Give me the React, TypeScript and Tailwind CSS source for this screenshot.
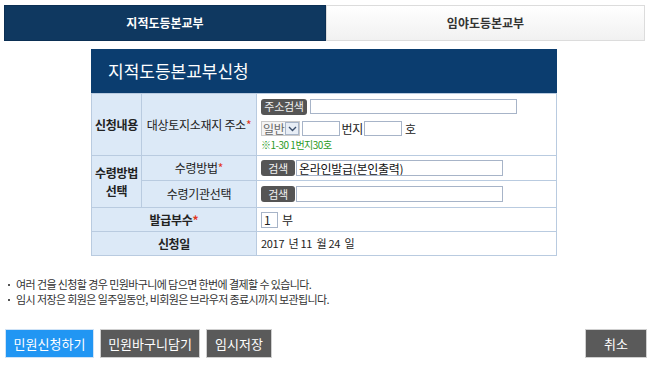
import React from "react";

const labelCell = "border border-[#b9cbe0] bg-[#dce9f7] text-center text-[#222]";
const valueCell = "border border-[#b9cbe0] bg-white ps-[4px] text-[#222]";
const textInput = "h-[15px] border border-[#a7b4c8] bg-white px-[2px] text-[12px] leading-[13px] outline-none";

function Required() {
  return <span className="text-[#e2371c]">*</span>;
}

function DarkButton({ children, className = "" }: { children: React.ReactNode; className?: string }) {
  return (
    <span
      className={[
        "inline-flex h-[16px] items-center justify-center rounded-[3px] bg-[#555555] text-[11px] leading-none tracking-[-0.3px] text-[#f2f2f2]",
        className,
      ].join(" ")}
    >
      {children}
    </span>
  );
}

function FooterButton({ children, tone, width }: { children: React.ReactNode; tone: "blue" | "gray"; width: string }) {
  const toneClass =
    tone === "blue"
      ? "bg-[#2196f3] border-[#cfe3f7]"
      : "bg-[#5a5a5a] border-[#cfcfcf]";
  return (
    <button
      type="button"
      className={["flex h-[29px] items-center justify-center border text-[13px] text-white", toneClass, width].join(" ")}
    >
      {children}
    </button>
  );
}

export default function App() {
  return (
    <div className="h-[368px] w-[650px] bg-white font-['Noto_Sans_CJK_KR','Noto_Sans',sans-serif] text-[12px] text-[#222]">
      {/* tabs */}
      <div className="ms-[4px] flex h-[36px] w-[641px] translate-y-[5px]">
        <div className="flex w-[322px] items-center justify-center border border-[#0b2f54] bg-[#0f3860] text-[12px] font-bold text-white">
          지적도등본교부
        </div>
        <div className="flex flex-1 items-center justify-center border border-[#dcdcdc] bg-gradient-to-b from-white to-[#f1f1f1] text-[12px] font-bold text-[#333]">
          임야도등본교부
        </div>
      </div>

      {/* form panel */}
      <div className="ms-[91px] mt-[13px] w-[466px]">
        <div className="flex h-[44px] items-center bg-[#0b3d6f] ps-[17px] text-[17px] text-white">
          지적도등본교부신청
        </div>
        <table className="w-full border-collapse text-[12px] tracking-[-0.3px]">
          <colgroup>
            <col className="w-[50px]" />
            <col className="w-[115px]" />
            <col />
          </colgroup>
          <tbody>
            <tr className="h-[62px]">
              <td className={[labelCell, "font-bold"].join(" ")}>신청내용</td>
              <td className={labelCell}>
                대상토지소재지 주소<Required />
              </td>
              <td className={valueCell}>
                <div className="flex items-center gap-[3px]">
                  <DarkButton className="w-[46px]">주소검색</DarkButton>
                  <input className={[textInput, "w-[207px]"].join(" ")} readOnly />
                </div>
                <div className="mt-[5px] flex items-center">
                  <span className="flex h-[15px] items-center border border-[#c9c9c9] bg-[#f4f4f4] ps-[1px] text-[12px] text-[#666]">
                    일반
                    <span className="ms-[1px] flex h-[13px] w-[14px] items-center justify-center border border-[#a7b4c8] bg-[#e8eef6]">
                      <svg width="9" height="6" viewBox="0 0 9 6">
                        <path d="M1 1l3.5 3.5L8 1" fill="none" stroke="#3a4d6a" strokeWidth="1.4" />
                      </svg>
                    </span>
                  </span>
                  <input className={[textInput, "ms-[2px] w-[38px]"].join(" ")} readOnly />
                  <span className="ms-[1px]">번지</span>
                  <input className={[textInput, "ms-[1px] w-[38px]"].join(" ")} readOnly />
                  <span className="ms-[3px]">호</span>
                </div>
                <div className="mt-[1px] text-[10px] leading-[12px] tracking-[-0.5px] text-[#2a9a1e]">※1-30 1번지30호</div>
              </td>
            </tr>
            <tr className="h-[25px]">
              <td rowSpan={2} className={[labelCell, "font-bold leading-[18px]"].join(" ")}>
                수령방법
                <br />
                선택
              </td>
              <td className={labelCell}>
                수령방법<Required />
              </td>
              <td className={valueCell}>
                <div className="flex items-center gap-[1px]">
                  <DarkButton className="w-[34px]">검색</DarkButton>
                  <input
                    className={[textInput, "h-[16px] w-[207px] text-[#111]"].join(" ")}
                    defaultValue="온라인발급(본인출력)"
                    readOnly
                  />
                </div>
              </td>
            </tr>
            <tr className="h-[27px]">
              <td className={labelCell}>수령기관선택</td>
              <td className={valueCell}>
                <div className="flex items-center gap-[1px]">
                  <DarkButton className="w-[34px]">검색</DarkButton>
                  <input className={[textInput, "h-[16px] w-[207px]"].join(" ")} readOnly />
                </div>
              </td>
            </tr>
            <tr className="h-[24px]">
              <td colSpan={2} className={[labelCell, "font-bold"].join(" ")}>
                발급부수<Required />
              </td>
              <td className={valueCell}>
                <div className="flex items-center">
                  <input className={[textInput, "h-[16px] w-[17px]"].join(" ")} defaultValue="1" readOnly />
                  <span className="ms-[4px]">부</span>
                </div>
              </td>
            </tr>
            <tr className="h-[24px]">
              <td colSpan={2} className={[labelCell, "font-bold"].join(" ")}>
                신청일
              </td>
              <td className={[valueCell, "text-[11px]"].join(" ")}>2017&nbsp;&nbsp;년 11&nbsp;&nbsp;월 24&nbsp;&nbsp;일</td>
            </tr>
          </tbody>
        </table>
      </div>

      {/* notes */}
      <ul className="ms-[8px] mt-[21px] text-[11px] leading-[15px] tracking-[-0.6px] text-[#333]">
        <li className="flex items-center gap-[6px]">
          <span className="h-[2px] w-[2px] bg-[#555]" />
          여러 건을 신청할 경우 민원바구니에 담으면 한번에 결제할 수 있습니다.
        </li>
        <li className="flex items-center gap-[6px]">
          <span className="h-[2px] w-[2px] bg-[#555]" />
          임시 저장은 회원은 일주일동안, 비회원은 브라우저 종료시까지 보관됩니다.
        </li>
      </ul>

      {/* actions */}
      <div className="mt-[22px] flex ps-[5px] pe-[3px]">
        <div className="flex gap-[6px]">
          <FooterButton tone="blue" width="w-[89px]">민원신청하기</FooterButton>
          <FooterButton tone="gray" width="w-[100px]">민원바구니담기</FooterButton>
          <FooterButton tone="gray" width="w-[66px]">임시저장</FooterButton>
        </div>
        <div className="ms-auto">
          <FooterButton tone="gray" width="w-[62px]">취소</FooterButton>
        </div>
      </div>
    </div>
  );
}
